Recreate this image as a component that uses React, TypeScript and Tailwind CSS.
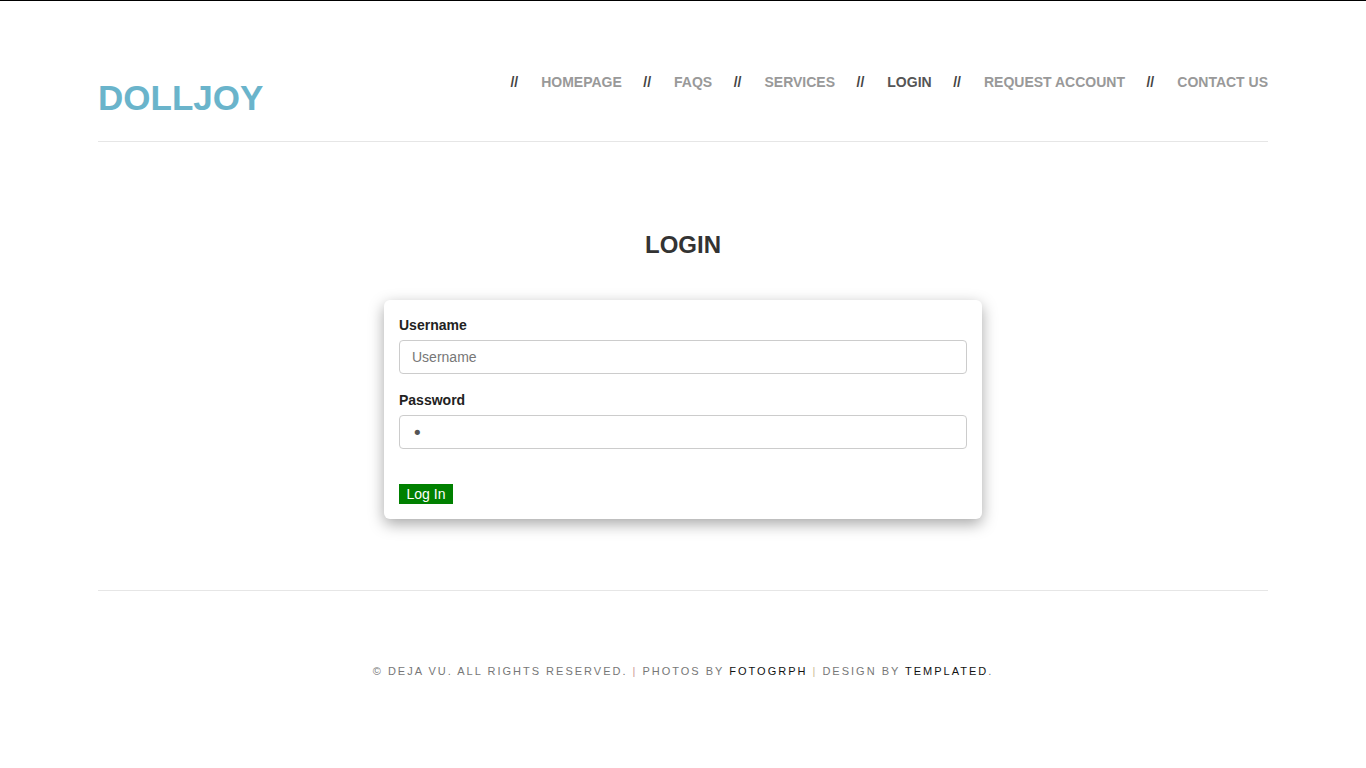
import React from 'react';

const navItems = [
  { label: 'HOMEPAGE' },
  { label: 'FAQS' },
  { label: 'SERVICES' },
  { label: 'LOGIN', active: true },
  { label: 'REQUEST ACCOUNT' },
  { label: 'CONTACT US' },
];

function Header() {
  return (
    <header className="flex justify-between items-start pt-[74px] pb-[26px] border-b border-[#e6e6e6]">
      <h1 className="mt-[5px] text-[35px] leading-[35px] font-bold text-[#6ab4cb]">DOLLJOY</h1>
      <nav>
        <ul className="flex gap-[21.5px] text-[14px] leading-[14px] font-bold">
          {navItems.map(({ label, active }) => (
            <li key={label} className="flex">
              <span className="mr-[23px] text-[#444]">//</span>
              <a href="#" className={active ? 'text-[#555]' : 'text-[#999]'}>{label}</a>
            </li>
          ))}
        </ul>
      </nav>
    </header>
  );
}

function LoginForm() {
  return (
    <section className="pt-[91px] pb-[71px] border-b border-[#e6e6e6]">
      <h2 className="text-center text-[24px] leading-[24px] font-bold text-[#333]">LOGIN</h2>
      <form className="mt-[43px] mx-auto w-[598px] bg-white rounded-[6px] p-[15px] shadow-[0_5px_15px_rgba(0,0,0,0.35)]">
        <label className="block text-[14px] leading-5 font-bold text-[#222] mb-[5px]">Username</label>
        <input
          type="text"
          placeholder="Username"
          className="block w-full h-[34px] border border-[#ccc] rounded-[4px] px-[12px] text-[14px] text-[#555] placeholder:text-[#777] outline-none"
        />
        <label className="block mt-[16px] text-[14px] leading-5 font-bold text-[#222] mb-[5px]">Password</label>
        <input
          type="password"
          defaultValue="x"
          className="block w-full h-[34px] border border-[#ccc] rounded-[4px] px-[12px] text-[18px] text-[#555] font-['DejaVu_Sans',sans-serif] outline-none"
        />
        <button type="button" className="mt-[35px] block w-[54px] h-[20px] bg-[#008000] text-white text-[14px] leading-[20px] text-center">
          Log In
        </button>
      </form>
    </section>
  );
}

function Footer() {
  return (
    <footer className="pt-[70px] pb-[87px] text-center text-[11px] leading-5 tracking-[2px] text-[#777]">
      © DEJA VU. ALL RIGHTS RESERVED. <span className="text-[#c99]">|</span> PHOTOS BY{' '}
      <a href="#" className="text-[#111]">FOTOGRPH</a> <span className="text-[#cb9]">|</span> DESIGN BY{' '}
      <a href="#" className="text-[#111]">TEMPLATED</a>.
    </footer>
  );
}

export default function App() {
  return (
    <div className="min-h-screen bg-white border-t border-black font-['Liberation_Sans',Arial,sans-serif]">
      <div className="w-[1170px] mx-auto">
        <Header />
        <LoginForm />
        <Footer />
      </div>
    </div>
  );
}
